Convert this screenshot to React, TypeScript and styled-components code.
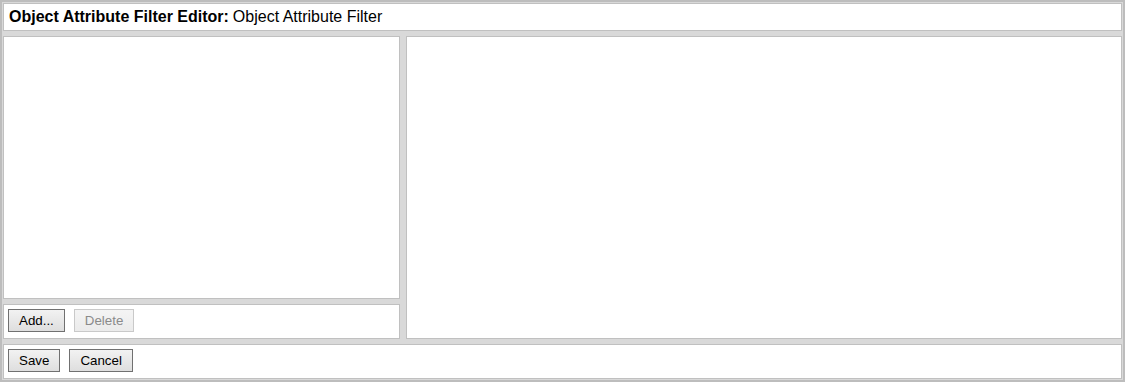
import styled, { createGlobalStyle } from 'styled-components'

const GlobalStyle = createGlobalStyle`
  html, body { margin: 0; padding: 0; background: #ffffff; }
  * { box-sizing: border-box; }
`

const Frame = styled.div`
  width: 1125px;
  height: 382px;
  border: 2px solid #bdbdbd;
  padding: 1px;
  background: #d9d9d9;
  display: flex;
  flex-direction: column;
  gap: 5px;
  font-family: 'Liberation Sans', Arial, sans-serif;
  color: #000;
`

const Panel = styled.div`
  background: #ffffff;
  border: 1px solid #c0c0c0;
`

const TitleBar = styled(Panel)`
  height: 28px;
  display: flex;
  align-items: center;
  padding: 0 5px;
  font-size: 16px;
  white-space: nowrap;
`

const TitleLabel = styled.b`
  font-weight: bold;
  margin-right: 4px;
`

const Middle = styled.div`
  flex: 1;
  display: flex;
  gap: 6px;
  min-height: 0;
`

const LeftColumn = styled.div`
  width: 397px;
  display: flex;
  flex-direction: column;
  gap: 5px;
`

const ListBox = styled(Panel)`
  flex: 1;
`

const ButtonRow = styled(Panel)`
  height: 35px;
  flex-shrink: 0;
  display: flex;
  align-items: flex-start;
  gap: 9px;
  padding: 4px 4px 0;
`

const DetailPane = styled(Panel)`
  flex: 1;
`

const Button = styled.button`
  font-family: 'Liberation Sans', Arial, sans-serif;
  font-size: 13.33px;
  height: 23px;
  padding: 0 10px;
  border: 1px solid #707070;
  border-radius: 0;
  background: linear-gradient(#f2f2f2, #dedede);
  color: #000;
  &:disabled {
    border-color: #c9c9c9;
    background: linear-gradient(#f4f4f4, #ebebeb);
    color: #8a8a8a;
  }
`

export default function App() {
  return (
    <>
      <GlobalStyle />
      <Frame>
        <TitleBar>
          <TitleLabel>Object Attribute Filter Editor:</TitleLabel>
          Object Attribute Filter
        </TitleBar>
        <Middle>
          <LeftColumn>
            <ListBox />
            <ButtonRow>
              <Button>Add...</Button>
              <Button disabled>Delete</Button>
            </ButtonRow>
          </LeftColumn>
          <DetailPane />
        </Middle>
        <ButtonRow>
          <Button>Save</Button>
          <Button>Cancel</Button>
        </ButtonRow>
      </Frame>
    </>
  )
}
